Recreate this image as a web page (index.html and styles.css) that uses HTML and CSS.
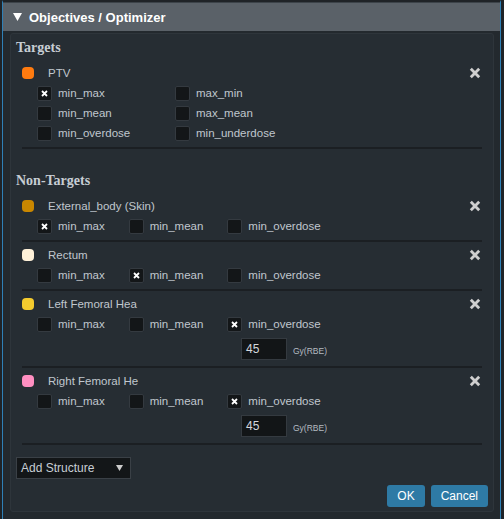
FILE: index.html
```html
<!DOCTYPE html>
<html>
<head>
<meta charset="utf-8">
<link rel="stylesheet" href="styles.css">
</head>
<body>
<div class="window">
  <div class="titlebar">
    <svg class="caret" width="9" height="8" viewBox="0 0 9 8"><polygon points="0,0 9,0 4.5,8" fill="#ffffff"/></svg>
    <span class="title">Objectives / Optimizer</span>
  </div>
  <div class="panel">
    <div class="heading">Targets</div>
    <div class="group">
      <div class="ghead">
        <span class="dot c-ptv"></span><span class="name">PTV</span>
        <svg class="close" width="12" height="12" viewBox="0 0 12 12"><path d="M1.8 1.8L10.2 10.2M10.2 1.8L1.8 10.2" stroke="#cfcfcf" stroke-width="2.8"/></svg>
      </div>
      <div class="grid2">
        <label class="cb"><span class="box"><svg width="7" height="7" viewBox="0 0 7 7"><path d="M1 1L6 6M6 1L1 6" stroke="#ffffff" stroke-width="1.8"/></svg></span>min_max</label>
        <label class="cb"><span class="box"></span>max_min</label>
        <label class="cb"><span class="box"></span>min_mean</label>
        <label class="cb"><span class="box"></span>max_mean</label>
        <label class="cb"><span class="box"></span>min_overdose</label>
        <label class="cb"><span class="box"></span>min_underdose</label>
      </div>
    </div>

    <div class="heading nt">Non-Targets</div>
    <div class="group">
      <div class="ghead">
        <span class="dot c-ext"></span><span class="name">External_body (Skin)</span>
        <svg class="close" width="12" height="12" viewBox="0 0 12 12"><path d="M1.8 1.8L10.2 10.2M10.2 1.8L1.8 10.2" stroke="#cfcfcf" stroke-width="2.8"/></svg>
      </div>
      <div class="row">
        <label class="cb"><span class="box"><svg width="7" height="7" viewBox="0 0 7 7"><path d="M1 1L6 6M6 1L1 6" stroke="#ffffff" stroke-width="1.8"/></svg></span>min_max</label>
        <label class="cb"><span class="box"></span>min_mean</label>
        <label class="cb"><span class="box"></span>min_overdose</label>
      </div>
    </div>
    <div class="group">
      <div class="ghead">
        <span class="dot c-rect"></span><span class="name">Rectum</span>
        <svg class="close" width="12" height="12" viewBox="0 0 12 12"><path d="M1.8 1.8L10.2 10.2M10.2 1.8L1.8 10.2" stroke="#cfcfcf" stroke-width="2.8"/></svg>
      </div>
      <div class="row">
        <label class="cb"><span class="box"></span>min_max</label>
        <label class="cb"><span class="box"><svg width="7" height="7" viewBox="0 0 7 7"><path d="M1 1L6 6M6 1L1 6" stroke="#ffffff" stroke-width="1.8"/></svg></span>min_mean</label>
        <label class="cb"><span class="box"></span>min_overdose</label>
      </div>
    </div>
    <div class="group dose">
      <div class="ghead">
        <span class="dot c-lfh"></span><span class="name">Left Femoral Hea</span>
        <svg class="close" width="12" height="12" viewBox="0 0 12 12"><path d="M1.8 1.8L10.2 10.2M10.2 1.8L1.8 10.2" stroke="#cfcfcf" stroke-width="2.8"/></svg>
      </div>
      <div class="row">
        <label class="cb"><span class="box"></span>min_max</label>
        <label class="cb"><span class="box"></span>min_mean</label>
        <label class="cb"><span class="box"><svg width="7" height="7" viewBox="0 0 7 7"><path d="M1 1L6 6M6 1L1 6" stroke="#ffffff" stroke-width="1.8"/></svg></span>min_overdose</label>
      </div>
      <div class="doserow"><span class="num">45</span><span class="unit">Gy(RBE)</span></div>
    </div>
    <div class="group dose">
      <div class="ghead">
        <span class="dot c-rfh"></span><span class="name">Right Femoral He</span>
        <svg class="close" width="12" height="12" viewBox="0 0 12 12"><path d="M1.8 1.8L10.2 10.2M10.2 1.8L1.8 10.2" stroke="#cfcfcf" stroke-width="2.8"/></svg>
      </div>
      <div class="row">
        <label class="cb"><span class="box"></span>min_max</label>
        <label class="cb"><span class="box"></span>min_mean</label>
        <label class="cb"><span class="box"><svg width="7" height="7" viewBox="0 0 7 7"><path d="M1 1L6 6M6 1L1 6" stroke="#ffffff" stroke-width="1.8"/></svg></span>min_overdose</label>
      </div>
      <div class="doserow"><span class="num">45</span><span class="unit">Gy(RBE)</span></div>
    </div>

    <div class="select"><span>Add Structure</span><svg width="7" height="6" viewBox="0 0 7 6"><polygon points="0,0 7,0 3.5,6" fill="#cccccc"/></svg></div>
    <div class="actions">
      <span class="btn">OK</span>
      <span class="btn">Cancel</span>
    </div>
  </div>
</div>
</body>
</html>
```
FILE: styles.css
```css
html, body {
  margin: 0;
  padding: 0;
  background: #1f2327;
  height: 519px;
  overflow: hidden;
}
.window {
  margin: 0 3px 0 2px;
  border-top: 2px solid #1f2327;
  border-left: 1px solid #2f80b6;
  border-right: 1px solid #2f80b6;
  background: #23292e;
  height: 517px;
  font-family: "Liberation Sans", Arial, sans-serif;
}
.titlebar {
  height: 29px;
  border-top: 1px solid #3c4349;
  box-sizing: border-box;
  background: #5a6168;
  display: flex;
  align-items: center;
  padding-left: 10px;
  gap: 7px;
}
.caret { display: block; }
.title {
  color: #ffffff;
  font-weight: bold;
  font-size: 13px;
}
.panel {
  margin: 2px 6px 0 7px;
  border: 1px solid #2e353b;
  border-radius: 3px;
  background: #262d33;
  padding: 3px 5px 4px;
}
.heading {
  height: 18px;
  line-height: 21px;
  font-family: "Liberation Serif", "Times New Roman", serif;
  font-weight: bold;
  font-size: 14px;
  color: #c6cdd4;
  margin-bottom: 5px;
}
.heading.nt { margin-top: 21px; }
.group {
  margin: 0 6px;
  padding: 3px 2px 4px 0;
  border-bottom: 2px solid #1b1f23;
}
.group.dose { padding-bottom: 6px; }
.ghead {
  height: 20px;
  display: flex;
  align-items: center;
}
.dot {
  width: 12px;
  height: 12px;
  border-radius: 4px;
  margin-right: 14px;
}
.c-ptv { background: #ff7b0f; }
.c-ext { background: #c98700; }
.c-rect { background: #fff1d9; }
.c-lfh { background: #f4cb2e; }
.c-rfh { background: #ff8fc1; }
.name {
  flex: 1;
  font-size: 11.5px;
  color: #c0c7ce;
}
.close { display: block; margin-right: -1px; }
.grid2 {
  display: grid;
  grid-template-columns: 138px auto;
  grid-auto-rows: 20px;
  padding-left: 15px;
}
.row {
  height: 20px;
  display: flex;
  align-items: center;
  padding-left: 15px;
  gap: 24px;
}
.cb {
  display: flex;
  align-items: center;
  gap: 6px;
  font-size: 11.5px;
  color: #c0c7ce;
}
.box {
  width: 15px;
  height: 15px;
  box-sizing: border-box;
  background: #131618;
  border: 1px solid #343a40;
  border-radius: 2px;
  display: flex;
  align-items: center;
  justify-content: center;
}
.box svg { display: block; }
.doserow {
  margin: 4px 0 0 219px;
  height: 22px;
  display: flex;
  align-items: center;
  gap: 6px;
}
.num {
  width: 46px;
  height: 22px;
  box-sizing: border-box;
  background: #121517;
  border: 1px solid #343a40;
  color: #d4d8dc;
  font-size: 12px;
  line-height: 20px;
  padding-left: 4px;
}
.unit {
  font-size: 8.5px;
  color: #b4bbc2;
  padding-top: 3px;
}
.select {
  margin-top: 12px;
  width: 115px;
  height: 22px;
  box-sizing: border-box;
  background: #131618;
  border: 1px solid #3a4046;
  display: flex;
  align-items: center;
  justify-content: space-between;
  padding: 0 7px 0 4px;
  font-size: 12px;
  color: #c8ced4;
}
.select svg { display: block; }
.actions {
  margin-top: 6px;
  display: flex;
  justify-content: flex-end;
  gap: 6px;
}
.btn {
  height: 22px;
  line-height: 22px;
  padding: 0 10px;
  background: #2e7aa5;
  border-radius: 3px;
  color: #ffffff;
  font-size: 12px;
}
```
